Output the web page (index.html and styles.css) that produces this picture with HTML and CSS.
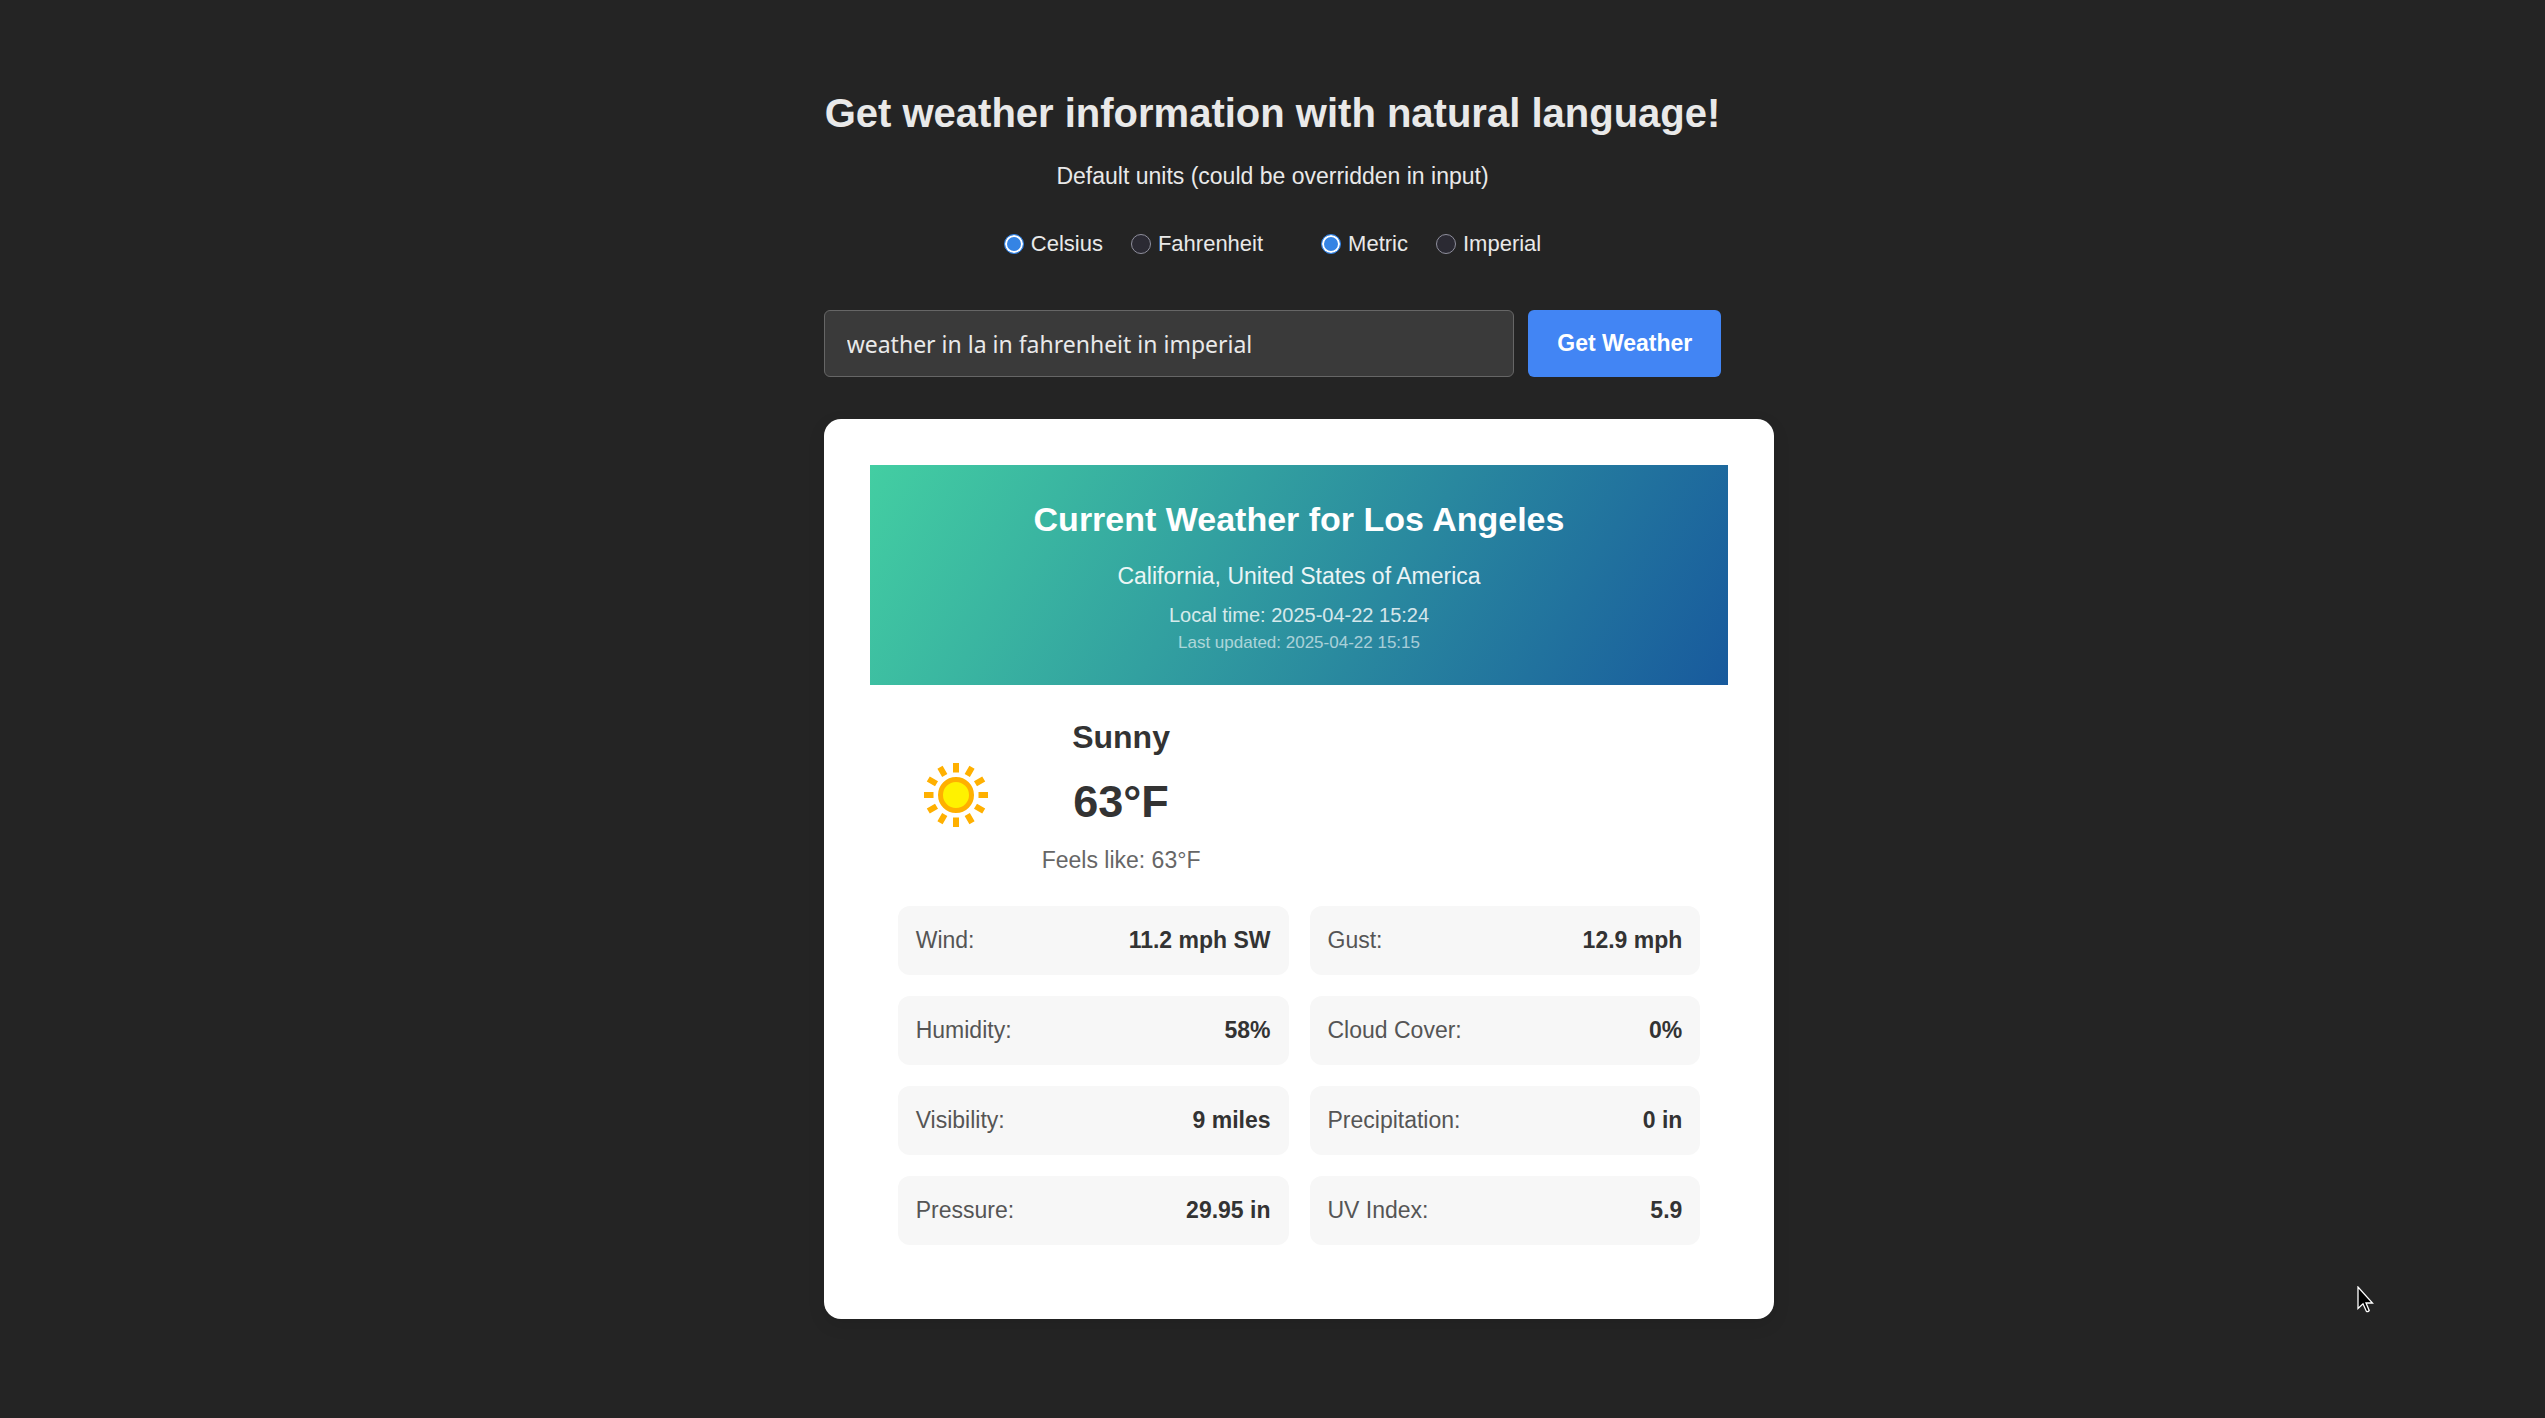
FILE: index.html
```html
<!DOCTYPE html>
<html lang="en">
<head>
<meta charset="utf-8">
<meta name="viewport" content="width=device-width, initial-scale=1">
<title>Weather</title>
<link rel="stylesheet" href="styles.css">
</head>
<body>
<main class="app">
  <h1 class="app-title">Get weather information with natural language!</h1>
  <p class="units-hint">Default units (could be overridden in input)</p>

  <form class="query-form">
    <div class="units">
      <div class="unit-group" role="radiogroup" aria-label="Temperature">
        <label class="unit"><input class="radio" type="radio" name="temperature" checked>Celsius</label>
        <label class="unit"><input class="radio" type="radio" name="temperature">Fahrenheit</label>
      </div>
      <div class="unit-group" role="radiogroup" aria-label="Measurement system">
        <label class="unit"><input class="radio" type="radio" name="system" checked>Metric</label>
        <label class="unit"><input class="radio" type="radio" name="system">Imperial</label>
      </div>
    </div>
    <div class="query-row">
      <input class="query" type="text" aria-label="Weather query" value="weather in la in fahrenheit in imperial">
      <button class="submit" type="button">Get Weather</button>
    </div>
  </form>

  <section class="card">
    <header class="card-header">
      <h2 class="card-title">Current Weather for Los Angeles</h2>
      <p class="region">California, United States of America</p>
      <p class="local-time">Local time: 2025-04-22 15:24</p>
      <p class="updated">Last updated: 2025-04-22 15:15</p>
    </header>

    <div class="current">
      <div class="icon-box">
        <svg class="sun" viewBox="0 0 92 92" role="img" aria-label="Sunny">
          <circle cx="46" cy="46" r="15.5" fill="#fff200" stroke="#ffb000" stroke-width="5"/>
          <g stroke="#ffb000" stroke-width="6">
            <path id="ray" d="M46 14v9.500M46 68.500v9.500"/>
            <use href="#ray" transform="rotate(30 46 46)"/>
            <use href="#ray" transform="rotate(60 46 46)"/>
            <use href="#ray" transform="rotate(90 46 46)"/>
            <use href="#ray" transform="rotate(120 46 46)"/>
            <use href="#ray" transform="rotate(150 46 46)"/>
          </g>
        </svg>
      </div>
      <div class="reading">
        <h3 class="condition">Sunny</h3>
        <p class="temperature">63°F</p>
        <p class="feels-like">Feels like: 63°F</p>
      </div>
    </div>

    <dl class="details">
      <div class="detail"><dt>Wind:</dt><dd>11.2 mph SW</dd></div>
      <div class="detail"><dt>Gust:</dt><dd>12.9 mph</dd></div>
      <div class="detail"><dt>Humidity:</dt><dd>58%</dd></div>
      <div class="detail"><dt>Cloud Cover:</dt><dd>0%</dd></div>
      <div class="detail"><dt>Visibility:</dt><dd>9 miles</dd></div>
      <div class="detail"><dt>Precipitation:</dt><dd>0 in</dd></div>
      <div class="detail"><dt>Pressure:</dt><dd>29.95 in</dd></div>
      <div class="detail"><dt>UV Index:</dt><dd>5.9</dd></div>
    </dl>
  </section>
</main>

<svg class="pointer" viewBox="0 0 18 28" aria-hidden="true">
  <path d="M1 1v21.500l5-4.700 3.200 7.200q1.500 1.500 3-.5l-3.200-7.500h6.500z" fill="#000" stroke="#fff" stroke-width="1.300"/>
</svg>
</body>
</html>
```
FILE: styles.css
```css
* {
  box-sizing: border-box;
}

body {
  margin: 0;
  min-height: 100vh;
  background: #242424;
  color: #e9e9e9;
  font-family: "Liberation Sans", Arial, sans-serif;
  font-size: 23px;
  line-height: 34px;
}

h1, h2, h3, p, dl, dd {
  margin: 0;
}

.app {
  width: fit-content;
  margin: 0 auto;
  padding: 89px 0;
}

.app-title {
  padding: 0 1px;
  font-size: 40px;
  line-height: 48px;
  text-align: center;
}

.units-hint {
  margin-top: 22px;
  text-align: center;
}

.units {
  display: flex;
  justify-content: center;
  gap: 58px;
  margin-top: 35px;
  font-size: 22px;
  line-height: 32px;
}

.unit-group {
  display: flex;
  gap: 28px;
}

.unit {
  display: flex;
  align-items: center;
  gap: 7px;
}

.radio {
  appearance: none;
  width: 20px;
  height: 20px;
  margin: 0;
  border: 1px solid #8f8f9d;
  border-radius: 50%;
  background: #2b2a33;
}

.radio:checked {
  border-color: #3584e4;
  background: #3584e4;
  box-shadow: inset 0 0 0 2px #fff;
}

.query-row {
  display: flex;
  gap: 14px;
  margin-top: 50px;
}

.query {
  flex: 1;
  min-width: 0;
  height: 67px;
  padding: 0 22px;
  border: 1px solid #666;
  border-radius: 6px;
  background: #3a3a3a;
  color: #e9e9e9;
  font-family: "Noto Sans", sans-serif;
  font-size: 23px;
}

.submit {
  padding: 0 29px;
  border: 0;
  border-radius: 6px;
  background: #4285f4;
  color: #fff;
  font-family: inherit;
  font-size: 23px;
  font-weight: 700;
}

.card {
  margin: 42px -53px 0 0;
  padding: 46px;
  border-radius: 17px;
  background: #fff;
  box-shadow: 0 6px 17px rgba(0, 0, 0, 0.1);
  color: #333;
}

.card-header {
  padding: 28px 28px 29px;
  background: linear-gradient(120deg, #43cea2, #185a9d);
  color: #fff;
  text-align: center;
}

.card-title {
  font-size: 34px;
  line-height: 52px;
}

.region {
  margin-top: 14px;
  opacity: 0.9;
}

.local-time {
  margin-top: 7px;
  font-size: 20px;
  line-height: 30px;
  opacity: 0.8;
}

.updated {
  font-size: 17px;
  line-height: 26px;
  opacity: 0.6;
}

.current {
  display: flex;
  align-items: center;
  gap: 28px;
  padding: 28px 28px 29px;
}

.icon-box {
  display: flex;
  padding: 0 12px;
}

.sun {
  width: 92px;
  height: 92px;
}

.reading {
  text-align: center;
}

.condition {
  font-size: 32px;
  line-height: 48px;
}

.temperature {
  margin: 7px 0;
  font-size: 45px;
  font-weight: 700;
  line-height: 68px;
}

.feels-like {
  color: #666;
}

.details {
  display: grid;
  grid-template-columns: 1fr 1fr;
  gap: 21px;
  padding: 0 28px 28px;
}

.detail {
  display: flex;
  justify-content: space-between;
  padding: 18px;
  border-radius: 12px;
  background: #f7f7f7;
  line-height: 33px;
}

.detail dt {
  color: #555;
}

.detail dd {
  font-weight: 700;
}

.pointer {
  position: absolute;
  left: 2357px;
  top: 1286px;
  width: 18px;
  height: 28px;
}
```
